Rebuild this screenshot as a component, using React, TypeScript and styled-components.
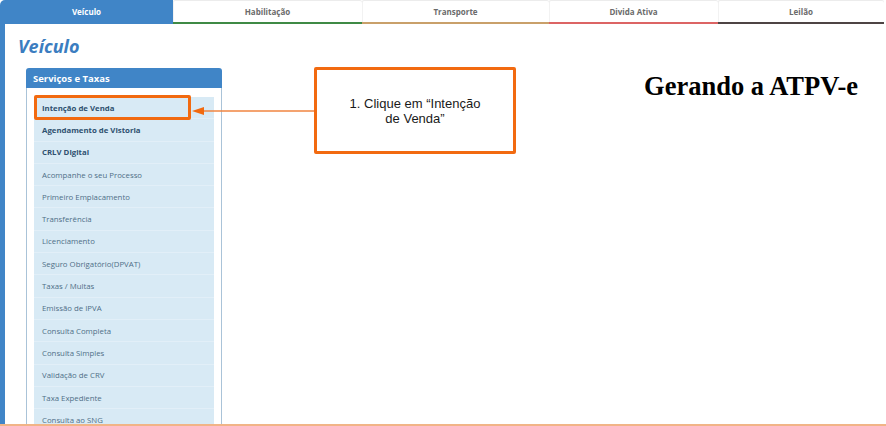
import React from 'react';
import styled, { createGlobalStyle } from 'styled-components';

const BLUE   = '#4085c7';
const ORANGE = '#f26a10';
const FONT   = `'Open Sans', 'Noto Sans', sans-serif`;

const Global = createGlobalStyle`
  html, body { margin: 0; padding: 0; background: #fff; }
  body { width: 886px; height: 426px; overflow: hidden; }
`;

const Page = styled.div`
  width: 886px;
  height: 426px;
  box-sizing: border-box;
  border-bottom: 2px solid #f1b487;
  display: flex;
  flex-direction: column;
  overflow: hidden;
  font-family: ${FONT};
`;

const TabBar = styled.div`
  display: flex;
  height: 24px;
  flex-shrink: 0;
  padding-right: 2px;
`;

const Tab = styled.div<{ $w: number; $line: string; $active?: boolean }>`
  width: ${p => p.$w}px;
  box-sizing: border-box;
  display: flex;
  align-items: center;
  justify-content: center;
  font-size: 8px;
  font-weight: 700;
  color: ${p => (p.$active ? '#fff' : '#6b6b6b')};
  background: ${p => (p.$active ? BLUE : '#fff')};
  border-radius: ${p => (p.$active ? '5px 0 0 0' : '2px 2px 0 0')};
  border-bottom: 2px solid ${p => p.$line};
  box-shadow: ${p => (p.$active ? 'none' : 'inset 0 1px 0 #ececec, inset 1px 0 0 #f2f2f2')};
`;

const Main = styled.div`
  flex: 1;
  display: flex;
  flex-direction: column;
  border-left: 5px solid ${BLUE};
  padding: 11px 0 0 13px;
  min-height: 0;
`;

const Title = styled.h1`
  margin: 0;
  font-size: 18px;
  font-weight: 700;
  font-style: italic;
  color: #3b7dc0;
  line-height: 22px;
`;

const Row = styled.div`
  position: relative;
  display: flex;
  align-items: flex-start;
  margin: 10px 0 0 8px;
  flex: 1;
  min-height: 0;
`;

const Panel = styled.div`
  width: 196px;
  align-self: stretch;
  margin-top: 1px;
  display: flex;
  flex-direction: column;
`;

const PanelHeader = styled.div`
  height: 20px;
  flex-shrink: 0;
  background: ${BLUE};
  border-radius: 3px 3px 0 0;
  color: #fff;
  font-size: 9.5px;
  font-weight: 700;
  display: flex;
  align-items: center;
  padding-left: 7px;
`;

const PanelBody = styled.div`
  flex: 1 0 auto;
  border: 1px solid #aac3d8;
  border-top: none;
  padding: 9px 7px 0;
`;

const List = styled.ul`
  list-style: none;
  margin: 0;
  padding: 0;
  background: #d8eaf5;
`;

const Item = styled.li<{ $bold?: boolean }>`
  position: relative;
  height: 22.3px;
  box-sizing: border-box;
  display: flex;
  align-items: center;
  padding-left: 8px;
  font-size: 7.8px;
  font-weight: ${p => (p.$bold ? 700 : 400)};
  color: ${p => (p.$bold ? '#2f5170' : '#4f6f87')};
  border-bottom: 1px solid #e2eff8;
`;

const Highlight = styled.span`
  position: absolute;
  left: 0;
  top: -2px;
  width: 157px;
  height: 25px;
  box-sizing: border-box;
  border: 3px solid ${ORANGE};
  border-radius: 2px;
`;

const Arrow = styled.svg`
  position: absolute;
  left: 166px;
  top: 38px;
`;

const Callout = styled.div`
  width: 202px;
  height: 87px;
  box-sizing: border-box;
  margin-left: 92px;
  border: 3px solid ${ORANGE};
  border-radius: 2px;
  background: #fff;
  display: flex;
  align-items: center;
  justify-content: center;
  text-align: center;
  font-family: 'Liberation Sans', Arial, sans-serif;
  font-size: 13px;
  line-height: 15px;
  color: #1a1a1a;
  padding: 0 30px;
`;

const Heading = styled.h2`
  margin: 4px 28px 0 auto;
  font-family: 'Liberation Serif', 'Times New Roman', serif;
  font-size: 26.5px;
  font-weight: 700;
  color: #000;
  line-height: 30px;
`;

const TABS = [
  { label: 'Veículo',      w: 173, line: BLUE,      active: true },
  { label: 'Habilitação',  w: 189, line: '#3f8a45' },
  { label: 'Transporte',   w: 187, line: '#c9a06a' },
  { label: 'Divida Ativa', w: 169, line: '#dc6464' },
  { label: 'Leilão',       w: 166, line: '#4d4444' },
];

const ITEMS: { label: string; bold?: boolean; mark?: boolean }[] = [
  { label: 'Intenção de Venda', bold: true, mark: true },
  { label: 'Agendamento de Vistoria', bold: true },
  { label: 'CRLV Digital', bold: true },
  { label: 'Acompanhe o seu Processo' },
  { label: 'Primeiro Emplacamento' },
  { label: 'Transferência' },
  { label: 'Licenciamento' },
  { label: 'Seguro Obrigatório(DPVAT)' },
  { label: 'Taxas / Multas' },
  { label: 'Emissão de IPVA' },
  { label: 'Consulta Completa' },
  { label: 'Consulta Simples' },
  { label: 'Validação de CRV' },
  { label: 'Taxa Expediente' },
  { label: 'Consulta ao SNG' },
];

export default function App() {
  return (
    <>
      <Global />
      <Page>
        <TabBar>
          {TABS.map(t => (
            <Tab key={t.label} $w={t.w} $line={t.line} $active={t.active}>
              {t.label}
            </Tab>
          ))}
        </TabBar>
        <Main>
          <Title>Veículo</Title>
          <Row>
            <Panel>
              <PanelHeader>Serviços e Taxas</PanelHeader>
              <PanelBody>
                <List>
                  {ITEMS.map(it => (
                    <Item key={it.label} $bold={it.bold}>
                      {it.label}
                      {it.mark && <Highlight />}
                    </Item>
                  ))}
                </List>
              </PanelBody>
            </Panel>
            <Callout>1. Clique em “Intenção de Venda”</Callout>
            <Heading>Gerando a ATPV-e</Heading>
            <Arrow width="122" height="12" viewBox="0 0 122 12">
              <line x1="10" y1="6" x2="122" y2="6" stroke="#f08440" strokeWidth="1.5" />
              <polygon points="0,6 12,2 12,10" fill="#f26a10" />
            </Arrow>
          </Row>
        </Main>
      </Page>
    </>
  );
}
